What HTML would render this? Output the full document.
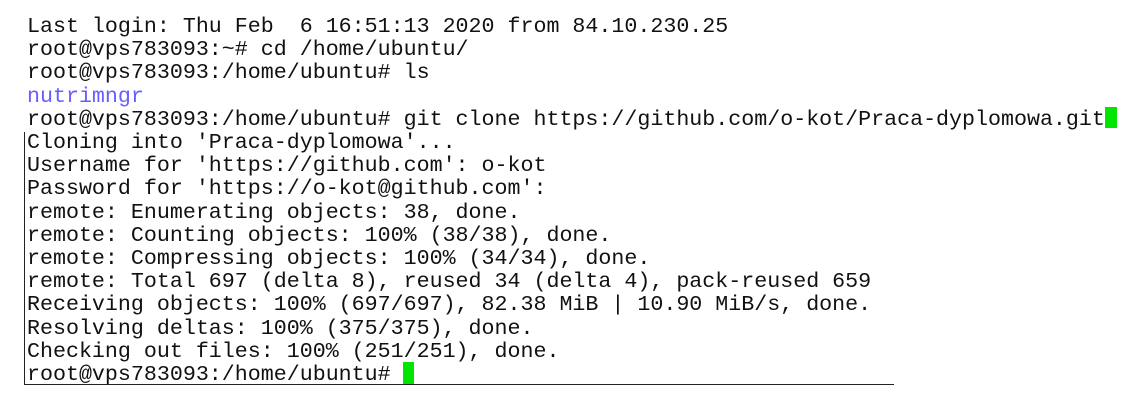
<!DOCTYPE html>
<html><head><meta charset="utf-8"><style>
html,body{margin:0;padding:0;background:#fff;width:1135px;height:412px;overflow:hidden}
.t{position:absolute;left:27px;top:15px;font-family:"Liberation Mono",monospace;font-size:21.65px;line-height:23.2px;color:#111;white-space:pre}
.b{color:#6b5cff}
.box{position:absolute;left:24px;top:132px;width:869px;height:252px;border-left:1px solid #222;border-bottom:1px solid #222}
.c1{position:absolute;left:1105px;top:107px;width:12px;height:21px;background:#00e600}
.c2{position:absolute;left:403px;top:362px;width:11px;height:22px;background:#00e600}
</style></head><body>
<div class="box"></div>
<div class="t">Last login: Thu Feb  6 16:51:13 2020 from 84.10.230.25
root@vps783093:~# cd /home/ubuntu/
root@vps783093:/home/ubuntu# ls
<span class="b">nutrimngr</span>
root@vps783093:/home/ubuntu# git clone https://github.com/o-kot/Praca-dyplomowa.git
Cloning into 'Praca-dyplomowa'...
Username for 'https://github.com': o-kot
Password for 'https://o-kot@github.com':
remote: Enumerating objects: 38, done.
remote: Counting objects: 100% (38/38), done.
remote: Compressing objects: 100% (34/34), done.
remote: Total 697 (delta 8), reused 34 (delta 4), pack-reused 659
Receiving objects: 100% (697/697), 82.38 MiB | 10.90 MiB/s, done.
Resolving deltas: 100% (375/375), done.
Checking out files: 100% (251/251), done.
root@vps783093:/home/ubuntu# </div>
<div class="c1"></div><div class="c2"></div>
</body></html>
